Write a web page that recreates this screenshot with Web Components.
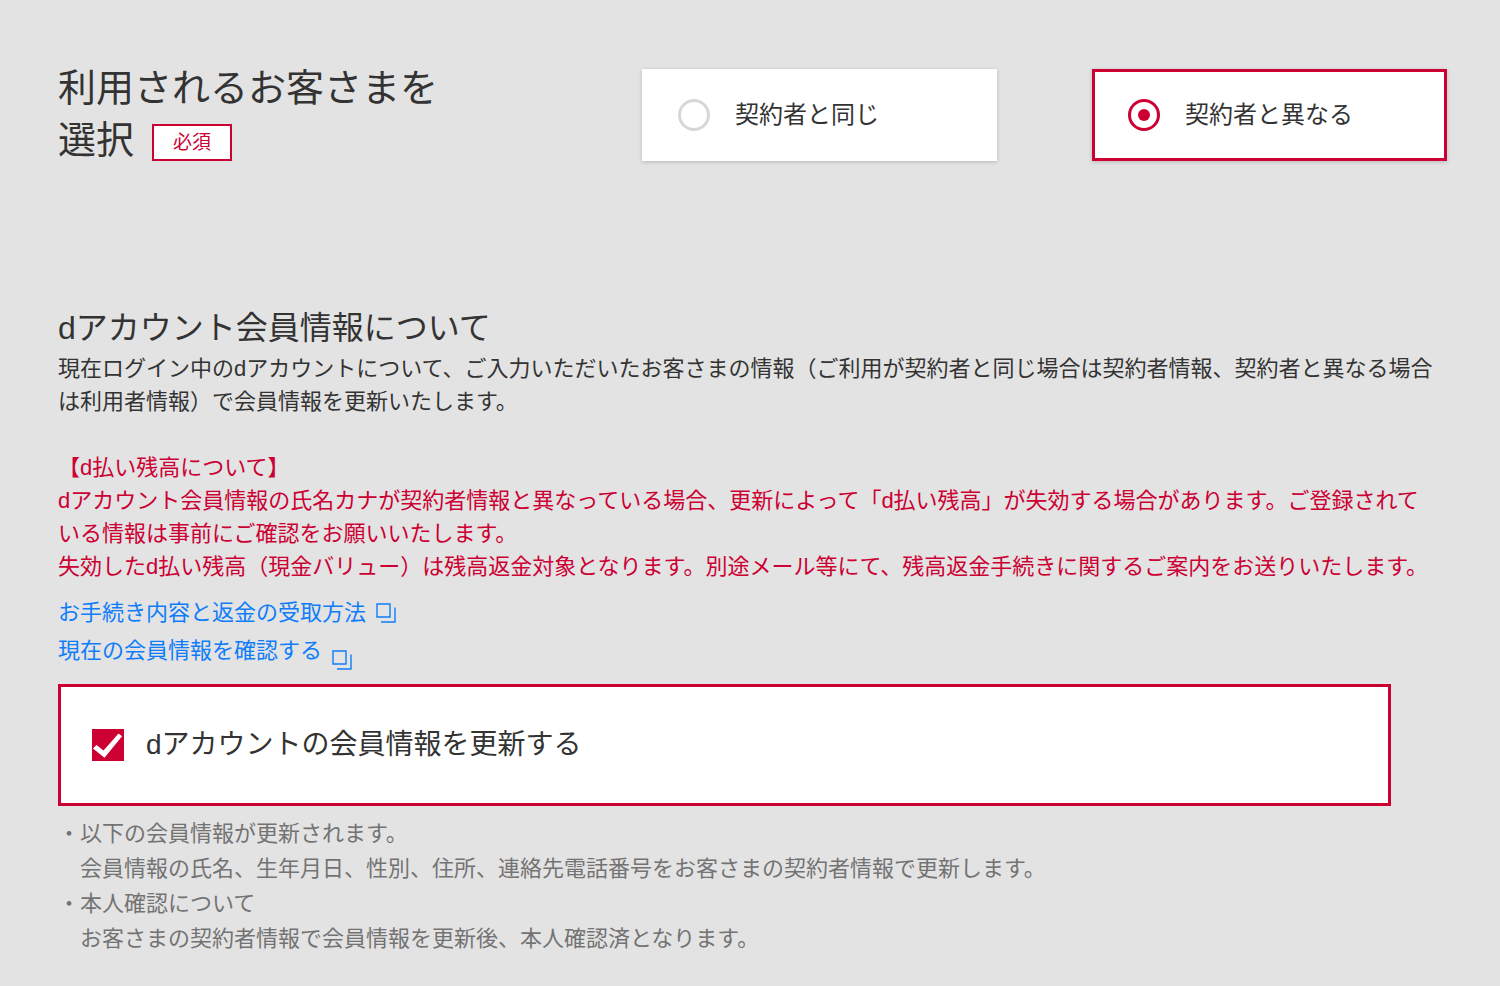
<!DOCTYPE html>
<html lang="ja">
<head>
<meta charset="utf-8">
<meta name="viewport" content="width=device-width, initial-scale=1">
<title>利用されるお客さまを選択</title>
<style>
  :root{
    --color-font:#333;
    --color-sub:#737373;
    --color-primary:#cc0033;
    --color-link:#0f7dfa;
    --color-line:#d7d7d7;
    --page-bg:#e3e3e3;
  }
  body{
    margin:0;
    background:var(--page-bg);
    color:var(--color-font);
    font:22px/33px "Liberation Sans","Noto Sans CJK JP",sans-serif;
  }
</style>
</head>
<body>
<user-form></user-form>

<script>
class requiredBadge extends HTMLElement{
  constructor(){
    super();
    this.attachShadow({mode:'open'}).innerHTML=`
    <style>
      :host{
        display:inline-block;
        box-sizing:border-box;
        padding:0 19px;
        border:2px solid var(--color-primary);
        background:#fff;
        color:var(--color-primary);
        font-size:19px;
        line-height:33px;
        vertical-align:middle;
      }
    </style>
    <slot></slot>
    `;
  }
}
customElements.define('required-badge',requiredBadge);

class radioCard extends HTMLElement{
  constructor(){
    super();
    this.shadow=this.attachShadow({mode:'open'});
    this.shadow.innerHTML=`
    <style>
      :host{
        display:block;
      }
      label{
        display:flex;
        align-items:center;
        gap:25px;
        box-sizing:border-box;
        min-height:92px;
        padding:0 33px;
        border:3px solid #fff;
        background:#fff;
        box-shadow:0 1px 4px rgba(0,0,0,.2);
        font-size:24px;
        line-height:36px;
        cursor:pointer;
      }
      label:has(input:checked){
        border-color:var(--color-primary);
      }
      input{
        appearance:none;
        flex:none;
        display:grid;
        place-items:center;
        box-sizing:border-box;
        width:32px;
        height:32px;
        margin:0;
        border:3px solid var(--color-line);
        border-radius:50%;
      }
      input:checked{
        border-color:var(--color-primary);
      }
      input:checked::before{
        content:"";
        width:12px;
        height:12px;
        border-radius:50%;
        background:var(--color-primary);
      }
    </style>
    <label>
      <input type="radio" name="user">
      <span><slot></slot></span>
    </label>
    `;
    this.inputNode=this.shadow.querySelector('input');
    this.inputNode.addEventListener('change',()=>{
      this.dispatchEvent(new CustomEvent('pick',{bubbles:true}));
    });
  }
  connectedCallback(){
    this.inputNode.checked=this.hasAttribute('checked');
  }
  set checked(v){
    this.inputNode.checked=v;
  }
  get checked(){
    return this.inputNode.checked;
  }
}
customElements.define('radio-card',radioCard);

class checkCard extends HTMLElement{
  constructor(){
    super();
    this.shadow=this.attachShadow({mode:'open'});
    this.shadow.innerHTML=`
    <style>
      :host{
        display:block;
      }
      label{
        display:flex;
        align-items:center;
        gap:22px;
        padding:37px 31px;
        border:3px solid #fff;
        background:#fff;
        font-size:28px;
        line-height:42px;
        cursor:pointer;
      }
      label:has(input:checked){
        border-color:var(--color-primary);
      }
      input{
        appearance:none;
        flex:none;
        display:grid;
        box-sizing:border-box;
        width:32px;
        height:32px;
        margin:0;
        border:3px solid var(--color-line);
      }
      input:checked{
        border:none;
        background:var(--color-primary);
      }
      input:checked::before{
        content:"";
        background:#fff;
        clip-path:polygon(3% 61%,14% 50%,36% 67%,83% 14%,94% 23%,39% 90%);
      }
    </style>
    <label>
      <input type="checkbox">
      <span><slot></slot></span>
    </label>
    `;
    this.inputNode=this.shadow.querySelector('input');
  }
  connectedCallback(){
    this.inputNode.checked=this.hasAttribute('checked');
  }
}
customElements.define('check-card',checkCard);

class windowLink extends HTMLElement{
  constructor(){
    super();
    this.attachShadow({mode:'open'}).innerHTML=`
    <style>
      :host{
        display:block;
        line-height:38px;
      }
      a{
        display:inline-flex;
        align-items:center;
        gap:10px;
        color:var(--color-link);
        text-decoration:none;
      }
      svg{
        flex:none;
        width:20px;
        height:20px;
        fill:none;
        stroke:currentColor;
        stroke-width:1.4;
      }
      :host([icon-low]) a{
        align-items:flex-end;
      }
    </style>
    <a href="${this.getAttribute('href')||'#'}">
      <slot></slot>
      <svg viewBox="0 0 20 20" aria-hidden="true">
        <path d="M1 1h13v13H1z"/>
        <path d="M19 4.500V19H5"/>
      </svg>
    </a>
    `;
  }
}
customElements.define('window-link',windowLink);

class noteList extends HTMLElement{
  constructor(){
    super();
    this.attachShadow({mode:'open'}).innerHTML=`
    <style>
      :host{
        display:block;
        color:var(--color-sub);
        line-height:35px;
      }
      ul{
        margin:0;
        padding:0;
        list-style:none;
      }
      ::slotted(li){
        padding-left:1em;
        text-indent:-1em;
      }
    </style>
    <ul><slot></slot></ul>
    `;
  }
}
customElements.define('note-list',noteList);

class userForm extends HTMLElement{
  constructor(){
    super();
    this.shadow=this.attachShadow({mode:'open'});
    this.shadow.innerHTML=`
    <style>
      :host{
        display:block;
        padding:62px 53px 30px 58px;
      }
      h1,h2,p{
        margin:0;
        font-weight:400;
      }
      .select-user{
        display:grid;
        grid-template-columns:489fr 355fr 355fr;
        column-gap:95px;
        align-items:start;
      }
      h1{
        font-size:38px;
        line-height:52px;
      }
      required-badge{
        margin-left:18px;
      }
      radio-card{
        margin-top:7px;
      }
      .account{
        margin-top:138px;
      }
      h2{
        font-size:32px;
        line-height:48px;
      }
      .caution{
        margin-top:33px;
        padding-right:10px;
        color:var(--color-primary);
      }
      nav{
        margin-top:11px;
      }
      check-card{
        width:96%;
        margin-top:14px;
      }
      note-list{
        margin-top:10px;
      }
    </style>
    <section class="select-user">
      <h1>利用されるお客さまを<br>選択<required-badge>必須</required-badge></h1>
      <radio-card>契約者と同じ</radio-card>
      <radio-card checked>契約者と異なる</radio-card>
    </section>
    <section class="account">
      <h2>dアカウント会員情報について</h2>
      <p>現在ログイン中のdアカウントについて、ご入力いただいたお客さまの情報（ご利用が契約者と同じ場合は契約者情報、契約者と異なる場合は利用者情報）で会員情報を更新いたします。</p>
      <p class="caution">【d払い残高について】<br>dアカウント会員情報の氏名カナが契約者情報と異なっている場合、更新によって「d払い残高」が失効する場合があります。ご登録されている情報は事前にご確認をお願いいたします。<br>失効したd払い残高（現金バリュー）は残高返金対象となります。別途メール等にて、残高返金手続きに関するご案内をお送りいたします。</p>
      <nav>
        <window-link>お手続き内容と返金の受取方法</window-link>
        <window-link icon-low>現在の会員情報を確認する</window-link>
      </nav>
      <check-card checked>dアカウントの会員情報を更新する</check-card>
      <note-list>
        <li>・以下の会員情報が更新されます。<br>会員情報の氏名、生年月日、性別、住所、連絡先電話番号をお客さまの契約者情報で更新します。</li>
        <li>・本人確認について<br>お客さまの契約者情報で会員情報を更新後、本人確認済となります。</li>
      </note-list>
    </section>
    `;
    // radios live in separate shadow roots, so the group is kept here
    const cards=[...this.shadow.querySelectorAll('radio-card')];
    this.shadow.addEventListener('pick',e=>{
      cards.forEach(card=>card.checked=card===e.target);
    });
  }
}
customElements.define('user-form',userForm);
</script>
</body>
</html>
